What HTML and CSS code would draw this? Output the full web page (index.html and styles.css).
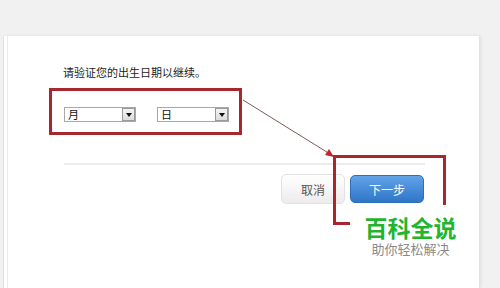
FILE: index.html
```html
<!DOCTYPE html>
<html lang="zh-CN">
<head>
  <meta charset="UTF-8">
  <meta name="viewport" content="width=device-width, initial-scale=1.0">
  <title>验证出生日期</title>
  <link rel="stylesheet" href="styles.css">
</head>
<body>

  <div class="page">
    <!-- Dialog panel -->
    <div class="panel">
      <p class="prompt">请验证您的出生日期以继续。</p>

      <div class="mark-box">
        <div class="select">
          <span class="select-value">月</span>
          <span class="select-btn"><i class="caret"></i></span>
        </div>
        <div class="select">
          <span class="select-value">日</span>
          <span class="select-btn"><i class="caret"></i></span>
        </div>
      </div>

      <div class="divider"></div>

      <div class="actions">
        <button class="btn btn-cancel">取消</button>
        <button class="btn btn-next">下一步</button>
      </div>
    </div>

    <!-- Annotations -->
    <svg class="arrow" width="500" height="288" viewBox="0 0 500 288">
      <line x1="243" y1="100" x2="330" y2="154" stroke="#7d5a5a" stroke-width="1"/>
      <polygon points="334,157 325,155 329,149" fill="#c0262c"/>
    </svg>
    <div class="mark-next"></div>

    <div class="watermark">
      <div class="wm-title">百科全说</div>
      <div class="wm-sub">助你轻松解决</div>
    </div>
  </div>

</body>
</html>
```

FILE: styles.css
```css
/* General Reset */
* {
  margin: 0;
  padding: 0;
  box-sizing: border-box;
}

body {
  font-family: "Noto Sans CJK SC", "Liberation Sans", sans-serif;
  background-color: #f1f1f1;
  color: #333;
  width: 500px;
  height: 288px;
  overflow: hidden;
}

.page {
  position: relative;
  height: 288px;
  padding-top: 36px;
  padding-left: 3px;
}

/* Panel */
.panel {
  width: 476px;
  height: 252px;
  background-color: #fff;
  border-left: 1px solid #e2e2e2;
  padding-left: 3px;
  box-shadow: 2px 0 3px rgba(0, 0, 0, 0.08);
  background-clip: padding-box;
  position: relative;
}

.panel::before {
  content: "";
  position: absolute;
  left: 3px;
  top: 0;
  bottom: 0;
  border-left: 1px solid #ececec;
}

.prompt {
  font-size: 11px;
  line-height: 14px;
  color: #222;
  padding-top: 29px;
  padding-left: 56px;
}

/* Red marked selects */
.mark-box {
  margin-left: 42px;
  margin-top: 9px;
  width: 193px;
  height: 47px;
  border: 3px solid #a8262c;
  display: flex;
  gap: 21px;
  padding: 16px 0 0 12px;
}

.select {
  width: 72px;
  height: 15px;
  border: 1px solid #a8a8a8;
  display: flex;
  justify-content: space-between;
  align-items: center;
  background-color: #fff;
}

.select-value {
  font-size: 11px;
  line-height: 13px;
  padding-left: 3px;
  color: #111;
}

.select-btn {
  width: 13px;
  height: 13px;
  border: 1px solid #9a9a9a;
  background: linear-gradient(#f4f4f4, #dcdcdc);
  display: flex;
  align-items: center;
  justify-content: center;
}

.caret {
  width: 0;
  height: 0;
  border-left: 3px solid transparent;
  border-right: 3px solid transparent;
  border-top: 4px solid #111;
}

.divider {
  margin-top: 28px;
  margin-left: 57px;
  width: 361px;
  height: 2px;
  background-color: #ececec;
}

/* Buttons */
.actions {
  display: flex;
  justify-content: flex-end;
  align-items: center;
  gap: 5px;
  margin-top: 9px;
  padding-right: 55px;
}

.btn {
  font-family: inherit;
  font-size: 12px;
  border-radius: 5px;
  cursor: pointer;
}

.btn-cancel {
  width: 64px;
  height: 30px;
  color: #555;
  border: 1px solid #e2e2e2;
  background: linear-gradient(#ffffff, #ececec);
}

.btn-next {
  width: 74px;
  height: 28px;
  color: #fff;
  border: 1px solid #2f6fb8;
  background: linear-gradient(#62a3e8, #2f76c8);
}

/* Annotations */
.arrow {
  position: absolute;
  left: 0;
  top: 0;
  pointer-events: none;
}

.mark-next {
  position: absolute;
  left: 333px;
  top: 155px;
  width: 113px;
  height: 70px;
  border: 3px solid #a8262c;
}

.watermark {
  position: absolute;
  left: 350px;
  top: 205px;
  width: 116px;
  height: 56px;
  padding-top: 9px;
  background-color: #fff;
  text-align: center;
}

.wm-title {
  font-size: 23px;
  font-weight: bold;
  line-height: 26px;
  color: #1fb52f;
  padding-left: 5px;
}

.wm-sub {
  font-size: 13px;
  line-height: 18px;
  color: #8a8a8a;
  padding-left: 5px;
}
```
